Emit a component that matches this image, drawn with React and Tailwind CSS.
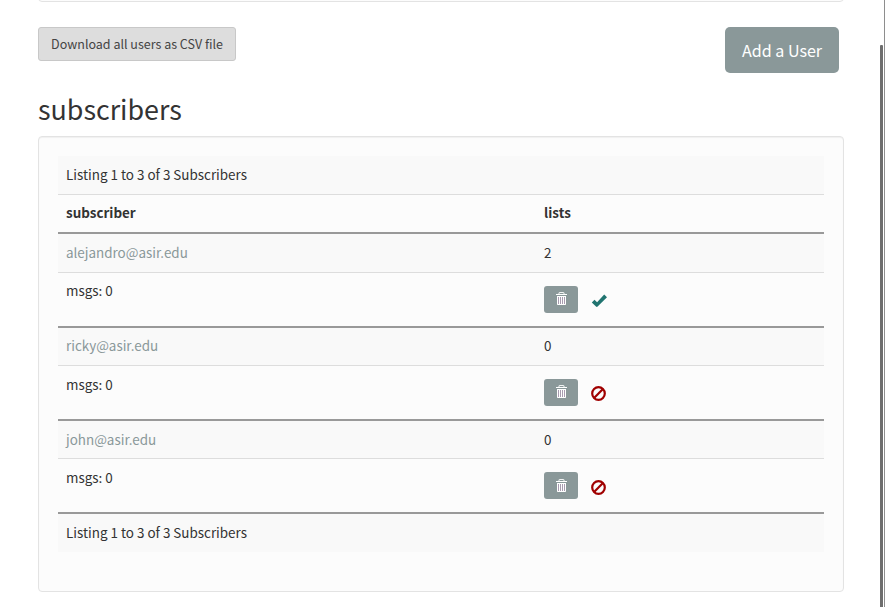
const subscribers = [
  { email: "alejandro@asir.edu", lists: 2, confirmed: true, head: "h-[39px] pb-0.5", msgs: "pt-[7px]", trash: "pt-1.5", icon: "mt-[21px]" },
  { email: "ricky@asir.edu", lists: 0, confirmed: false, head: "h-[38px] pb-0.5", msgs: "pt-2", trash: "pt-1.5", icon: "mt-5" },
  { email: "john@asir.edu", lists: 0, confirmed: false, head: "h-[38px]", msgs: "pt-2", trash: "pt-[7px]", icon: "mt-[21px]" },
];

function TrashIcon() {
  return (
    <svg width="12" height="14" viewBox="0 0 12 14" aria-hidden="true">
      <path d="M4 2.4V1.1Q4 0.4 4.7 0.4H8.3Q9 0.4 9 1.1V2.4" fill="none" stroke="#fff" />
      <path d="M1 2H12V3H1Z" fill="#fff" />
      <path d="M2 4H11V12.3Q11 13 10.3 13H2.7Q2 13 2 12.3Z" fill="#fff" />
      <path d="M3.5 5V12M5.5 5V12M7.5 5V12M9.5 5V12" stroke="#a99cb0" />
    </svg>
  );
}

function CheckIcon() {
  return (
    <svg width="16" height="14" viewBox="0 0 16 14" aria-hidden="true">
      <path d="M0.8 8.6L3.5 5.8L6.1 8.2L13.2 0.6L16 3.2L6.6 12.6Q5.8 13.4 5 12.6Z" fill="#207470" />
    </svg>
  );
}

function BanIcon() {
  return (
    <svg width="15" height="15" viewBox="0 0 15 15" fill="none" stroke="#a00000" strokeWidth="2.2" aria-hidden="true">
      <circle cx="7.5" cy="7.5" r="6.3" />
      <path d="M3.3 11.7L11.7 3.3" />
    </svg>
  );
}

function Subscriber({ item }) {
  return (
    <>
      <div className={`flex items-center border-b border-[#ddd] bg-[#f9f9f9] px-2 ${item.head}`}>
        <a className="w-[478px] text-[#8a9899]">{item.email}</a>
        <span>{item.lists}</span>
      </div>
      <div className="flex h-[55px] items-start border-b-2 border-[#999] px-2">
        <span className={`w-[478px] ${item.msgs}`}>msgs: 0</span>
        <span className={`mt-[13px] flex h-[27px] w-[34px] justify-center rounded-[3px] bg-[#8a9899] ${item.trash}`}>
          <TrashIcon />
        </span>
        <span className={`ml-[13px] ${item.icon}`}>
          {item.confirmed ? <CheckIcon /> : <BanIcon />}
        </span>
      </div>
    </>
  );
}

export default function App() {
  return (
    <div className="relative h-[607px] w-[885px] overflow-hidden bg-white pl-[38px] font-['Noto_Sans_CJK_SC','Noto_Sans',sans-serif] text-[13.43px] leading-[21px] text-[#333]">
      <div className="-mt-4 h-[18px] w-[806px] rounded border border-[#e3e3e3] bg-[#fcfcfc]" />
      <div className="mt-[25px] flex h-[46px] w-[801px] items-start justify-between">
        <button className="h-[34px] w-[198px] rounded-[3px] border border-[#c8c8c8] bg-[#ddd] pb-0.5 text-[12.5px] text-[#444]">
          Download all users as CSV file
        </button>
        <button className="h-[46px] w-[114px] rounded-[5px] bg-[#8a9899] text-[16.1px] text-white">Add a User</button>
      </div>
      <h1 className="mt-[17px] h-[46px] text-[26.85px] leading-[38px]">subscribers</h1>
      <div className="h-[456px] w-[806px] rounded border border-[#e3e3e3] bg-[#fcfcfc] px-[19px] pt-[19px] shadow-[inset_0_1px_1px_rgba(0,0,0,0.05)]">
        <div className="flex h-[39px] items-center border-b border-[#ddd] bg-[#f9f9f9] px-2 pb-0.5">
          Listing 1 to 3 of 3 Subscribers
        </div>
        <div className="flex h-[39px] items-center border-b-2 border-[#999] px-2 pb-0.5 font-bold">
          <span className="w-[478px]">subscriber</span>
          <span>lists</span>
        </div>
        {subscribers.map((item) => (
          <Subscriber key={item.email} item={item} />
        ))}
        <div className="flex h-[38px] items-center bg-[#f9f9f9] px-2 pb-0.5">Listing 1 to 3 of 3 Subscribers</div>
      </div>
      <div className="absolute right-0 top-0 h-full w-px bg-[#8e8e8e]" />
      <div className="absolute right-[2px] top-[45px] h-full w-[3px] rounded-t-[1px] bg-[#6e6e6e]" />
    </div>
  );
}
